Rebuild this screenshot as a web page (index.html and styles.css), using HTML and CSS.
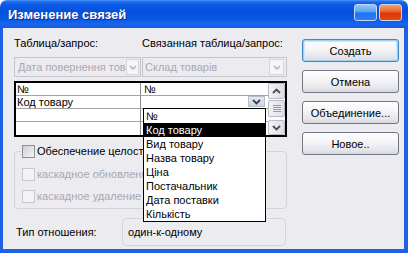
FILE: index.html
```html
<!DOCTYPE html>
<html lang="ru">
<head>
<meta charset="utf-8">
<title>Изменение связей</title>
<link rel="stylesheet" href="styles.css">
</head>
<body>
<div class="window">
  <div class="titlebar">
    <span class="title">Изменение связей</span>
    <div class="tb-buttons">
      <span class="tb-btn tb-help"></span>
      <span class="tb-btn tb-close"></span>
    </div>
  </div>
  <div class="frame">
    <div class="client">
      <div class="left">
        <div class="labels">
          <span>Таблица/запрос:</span>
          <span>Связанная таблица/запрос:</span>
        </div>
        <div class="combos">
          <div class="combo combo-a">
            <span class="combo-text">Дата повернення товарів</span>
            <span class="combo-btn"><svg width="8" height="5" viewBox="0 0 8 5"><polyline points="1,1 4,4 7,1" fill="none" stroke="#b9b8bf" stroke-width="1.7"/></svg></span>
          </div>
          <div class="combo combo-b">
            <span class="combo-text">Склад товарів</span>
            <span class="combo-btn"><svg width="8" height="5" viewBox="0 0 8 5"><polyline points="1,1 4,4 7,1" fill="none" stroke="#b9b8bf" stroke-width="1.7"/></svg></span>
          </div>
        </div>
        <div class="grid">
          <div class="grid-body">
            <div class="row"><div class="cell c1">№</div><div class="cell c2">№</div></div>
            <div class="row"><div class="cell c1">Код товару</div><div class="cell c2 c2-active"><span class="cell-btn"><svg width="9" height="6" viewBox="0 0 9 6"><polyline points="1,1 4.5,4.5 8,1" fill="none" stroke="#3a4050" stroke-width="1.8"/></svg></span></div></div>
            <div class="row"><div class="cell c1"></div><div class="cell c2"></div></div>
            <div class="row"><div class="cell c1"></div><div class="cell c2"></div></div>
          </div>
          <div class="scrollbar">
            <span class="sb-btn sb-up"><svg width="9" height="6" viewBox="0 0 9 6"><polyline points="1,5 4.5,1.5 8,5" fill="none" stroke="#4a4e5c" stroke-width="1.8"/></svg></span>
            <span class="sb-thumb"><svg width="8" height="8" viewBox="0 0 8 8"><path d="M0 0.5H8M0 2.5H8M0 4.5H8M0 6.5H8" stroke="#8e9bbf" stroke-width="1"/></svg></span>
            <span class="sb-track"></span>
            <span class="sb-btn sb-down"><svg width="9" height="6" viewBox="0 0 9 6"><polyline points="1,1 4.5,4.5 8,1" fill="none" stroke="#4a4e5c" stroke-width="1.8"/></svg></span>
          </div>
        </div>
        <fieldset class="integrity">
          <legend class="check"><span class="cb"></span>Обеспечение целостности данных</legend>
          <div class="check disabled row2"><span class="cb"></span>каскадное обновление связанных полей</div>
          <div class="check disabled row3"><span class="cb"></span>каскадное удаление связанных записей</div>
        </fieldset>
        <div class="type-row">
          <span class="type-label">Тип отношения:</span>
          <div class="type-box">один-к-одному</div>
        </div>
      </div>
      <div class="buttons">
        <button class="btn btn-default">Создать</button>
        <button class="btn">Отмена</button>
        <button class="btn">Объединение...</button>
        <button class="btn">Новое..</button>
      </div>
    </div>
  </div>
  <ul class="dropdown">
    <li>№</li>
    <li class="selected">Код товару</li>
    <li>Вид товару</li>
    <li>Назва товару</li>
    <li>Ціна</li>
    <li>Постачальник</li>
    <li>Дата поставки</li>
    <li>Кількість</li>
  </ul>
</div>
</body>
</html>
```

FILE: styles.css
```css
body {
  margin: 0;
  background: #ffffff;
  font-family: "Liberation Sans", Arial, sans-serif;
  font-size: 11px;
  color: #000;
}

.window {
  position: relative;
  width: 408px;
  height: 253px;
}

.titlebar {
  height: 28px;
  box-sizing: border-box;
  border-radius: 7px 7px 0 0;
  background: linear-gradient(to bottom, #4a93f8 0px, #1a68ec 2px, #0b59e4 5px, #0551dd 12px, #0957e3 19px, #1766ee 24px, #1a5fe0 27px, #104fd0 28px);
  display: flex;
  align-items: flex-start;
  justify-content: space-between;
  padding: 0 6px 0 8px;
}

.title {
  color: #fff;
  font-family: "Liberation Sans", Arial, sans-serif;
  font-weight: bold;
  font-size: 13px;
  line-height: 16px;
  margin-top: 7px;
  text-shadow: 1px 1px 0 #0b2c8e;
}

.tb-buttons {
  display: flex;
  gap: 2px;
  margin-top: 4px;
}

.tb-btn {
  width: 23px;
  height: 17px;
  box-sizing: border-box;
  border: 1px solid #c9d6ee;
  border-radius: 3px;
}

.tb-help {
  background: linear-gradient(to bottom, #8cc8fc 0%, #5eabf6 40%, #1f74f0 55%, #2a7ff6 100%);
}

.tb-close {
  background: linear-gradient(to bottom, #f5a070 0%, #ec6a2e 40%, #d8380a 55%, #e24a12 100%);
}

.frame {
  height: 225px;
  box-sizing: border-box;
  border-style: solid;
  border-color: #1f60e4;
  border-width: 0 4px 4px 3px;
}

.client {
  height: 100%;
  box-sizing: border-box;
  background: #ecebf0;
  display: flex;
  gap: 15px;
  padding: 9px 0 0 11px;
}

.left {
  width: 273px;
  display: flex;
  flex-direction: column;
}

.labels {
  display: grid;
  grid-template-columns: 128px 1fr;
  line-height: 13px;
  height: 13px;
}

.combos {
  display: grid;
  grid-template-columns: 127px 145px;
  gap: 1px;
  margin-top: 7px;
}

.combo {
  height: 20px;
  box-sizing: border-box;
  border: 1px solid #c6c5cc;
  display: flex;
  align-items: center;
  color: #a9a8ae;
  overflow: hidden;
}

.combo-a { padding-left: 3px; }
.combo-b { padding-left: 2px; }

.combo-text {
  flex: 1;
  white-space: nowrap;
  overflow: hidden;
}

.combo-btn {
  width: 13px;
  height: 16px;
  box-sizing: border-box;
  border: 1px solid #d6d5dc;
  background: #f6f6f8;
  display: flex;
  align-items: center;
  justify-content: center;
  margin-right: 1px;
  flex: none;
}

.combo-b .combo-btn { width: 15px; margin-right: 2px; }

.grid {
  margin-top: 4px;
  height: 56px;
  box-sizing: border-box;
  border: 2px solid #000;
  display: flex;
  background: #fff;
}

.grid-body {
  flex: 1;
}

.row {
  display: grid;
  grid-template-columns: 125px 1fr;
  height: 13px;
  box-sizing: border-box;
  border-bottom: 1px solid #a3a3a3;
}

.row:last-child { border-bottom: none; }

.cell {
  line-height: 12px;
  white-space: nowrap;
}

.c1 {
  padding-left: 1px;
  border-right: 1px solid #8a8a8a;
}

.c2 { padding-left: 3px; }

.c2-active {
  display: flex;
  justify-content: flex-end;
  padding-right: 3px;
}

.cell-btn {
  width: 17px;
  height: 11px;
  box-sizing: border-box;
  border: 1px solid #b8bcc8;
  background: linear-gradient(#e4e8f2, #ccd3e4);
  display: flex;
  align-items: center;
  justify-content: center;
}

.scrollbar {
  width: 17px;
  display: flex;
  flex-direction: column;
  background: #fbfbfc;
}

.sb-btn, .sb-thumb {
  box-sizing: border-box;
  border: 1px solid #b9bac6;
  border-radius: 2px;
  background: linear-gradient(to right, #f3f3f6, #dddde5);
  display: flex;
  align-items: center;
  justify-content: center;
}

.sb-up { height: 16px; }
.sb-thumb { height: 17px; margin-top: 1px; }
.sb-track { flex: 1; }
.sb-down { height: 15px; }

.integrity {
  margin: 8px 0 0;
  padding: 0 0 5px 6px;
  border: 1px solid #d4d3da;
  border-radius: 4px;
  min-width: 0;
}

.integrity legend {
  padding: 0 1px;
}

.check {
  display: flex;
  align-items: center;
  gap: 2px;
  height: 13px;
  line-height: 13px;
  white-space: nowrap;
}

.cb {
  width: 13px;
  height: 13px;
  box-sizing: border-box;
  border: 1px solid #8f8f96;
  background: linear-gradient(135deg, #cfcfd4, #f4f4f6);
  flex: none;
}

.disabled { color: #a9a8ae; }

.disabled .cb {
  border-color: #c9c8ce;
  background: #f3f3f5;
}

.row2 { margin: 10px 0 0 1px; }
.row3 { margin: 9px 0 0 1px; }

.type-row {
  margin-top: 9px;
  display: flex;
  align-items: center;
}

.type-label {
  width: 106px;
  padding-left: 2px;
}

.type-box {
  width: 164px;
  height: 28px;
  box-sizing: border-box;
  border: 1px solid #d4d3da;
  border-radius: 4px;
  padding-left: 5px;
  display: flex;
  align-items: center;
}

.buttons {
  width: 97px;
  display: flex;
  flex-direction: column;
  gap: 8px;
  padding-top: 2px;
}

.btn {
  height: 23px;
  margin: 0;
  padding: 0;
  box-sizing: border-box;
  border: 1px solid #707888;
  border-radius: 3px;
  background: linear-gradient(to bottom, #ffffff 0%, #f4f4f7 45%, #e6e6eb 80%, #d6d6dd 100%);
  font-family: "Liberation Sans", Arial, sans-serif;
  font-size: 11px;
  color: #000;
}

.btn-default {
  border-color: #3f86c4;
  box-shadow: inset 0 0 0 1px #9fd0f6, inset 0 0 0 2px #cde6fb;
}

.dropdown {
  position: absolute;
  left: 143px;
  top: 108px;
  width: 123px;
  height: 114px;
  box-sizing: border-box;
  margin: 0;
  padding: 0;
  list-style: none;
  border: 1px solid #000;
  background: #fff;
}

.dropdown li {
  height: 14px;
  line-height: 14px;
  padding-left: 2px;
  white-space: nowrap;
}

.dropdown li.selected {
  background: #000;
  color: #fff;
}
```
